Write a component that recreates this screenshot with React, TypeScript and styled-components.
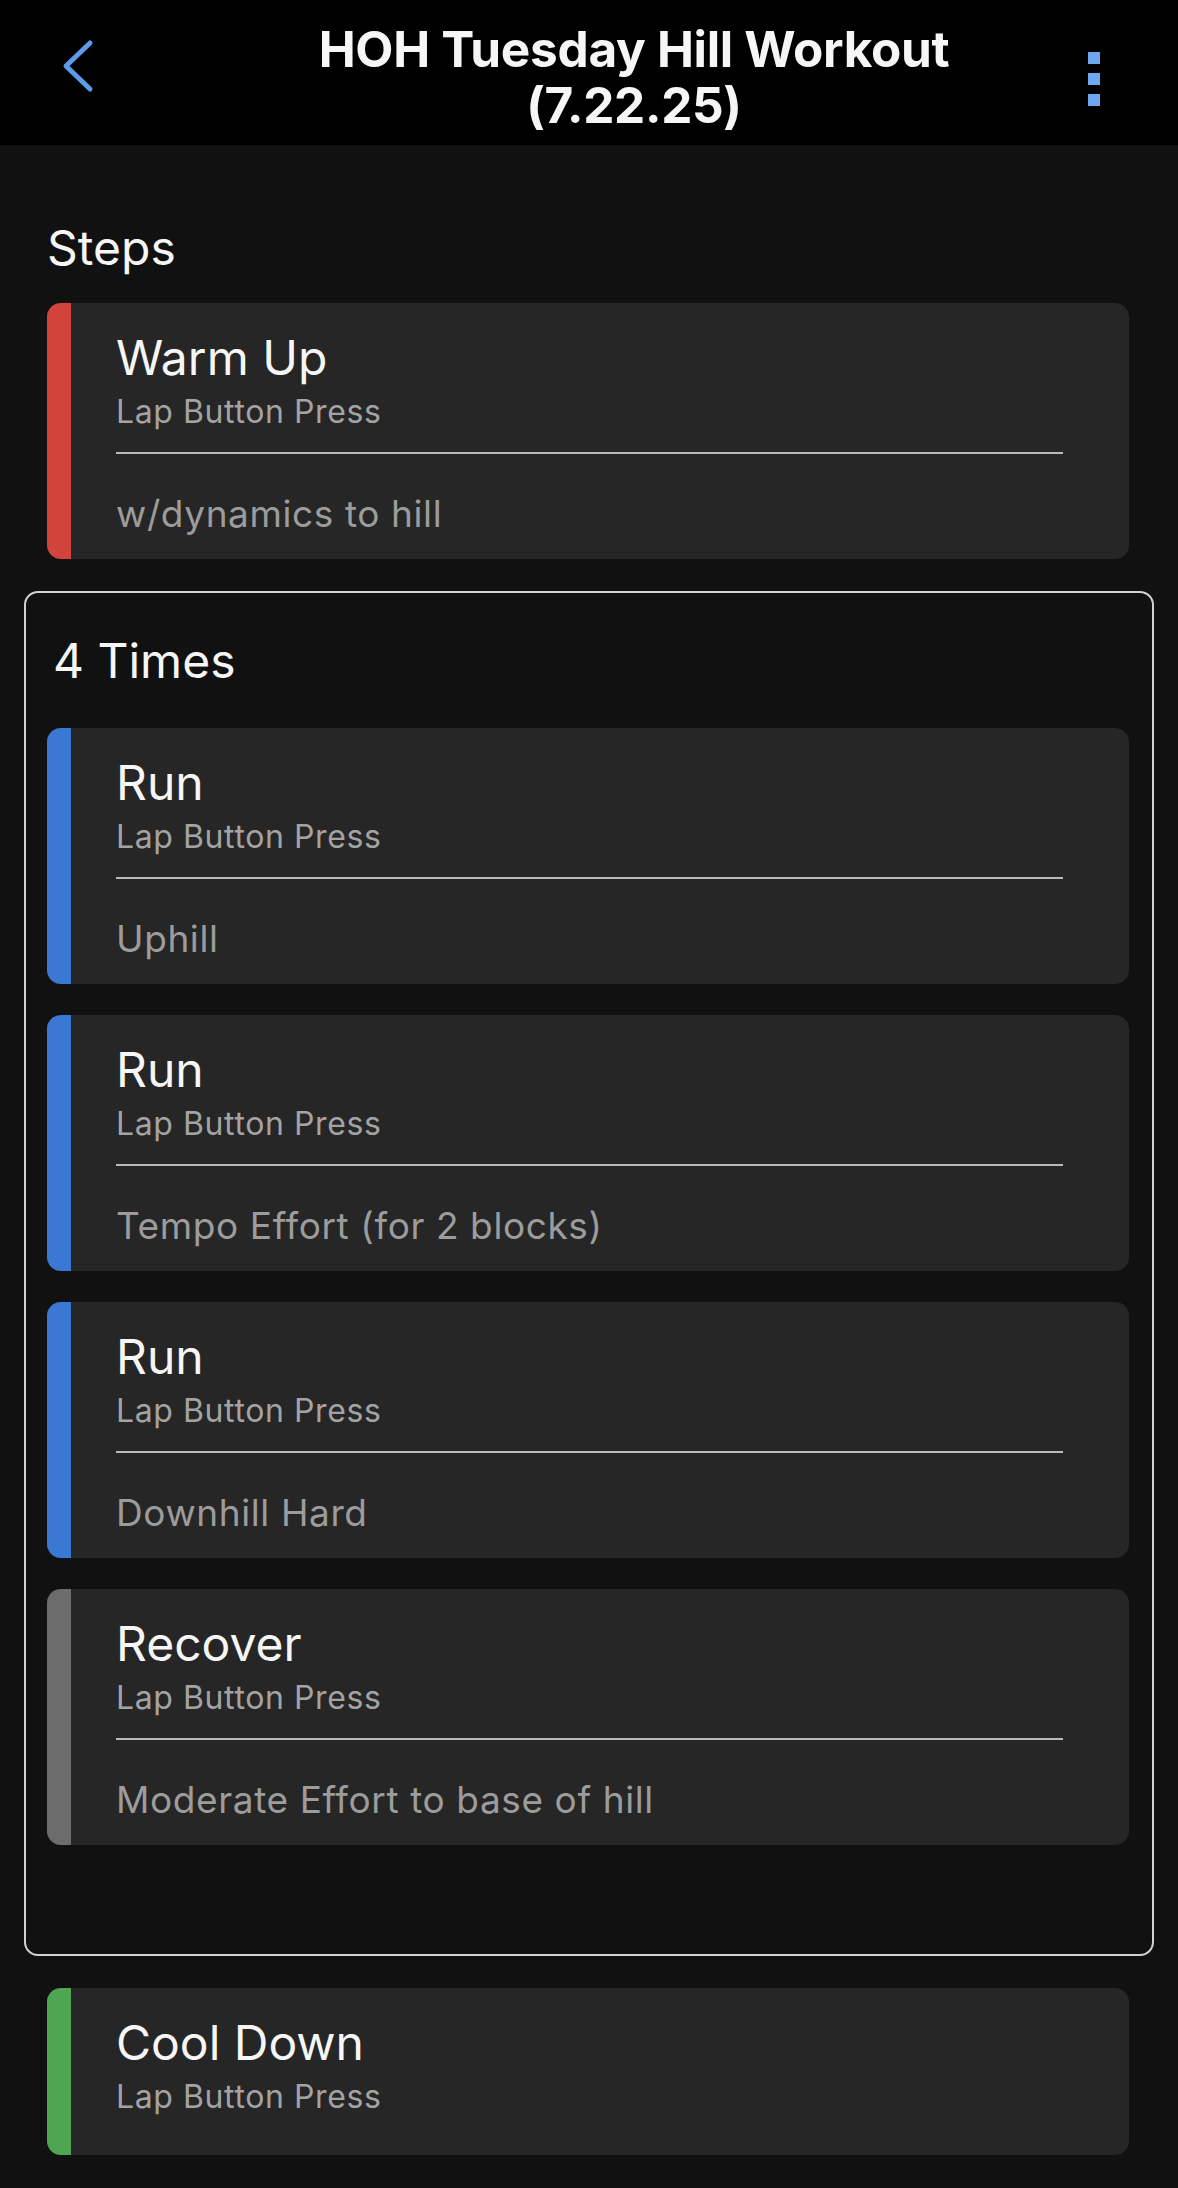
import React from "react";
import styled, { createGlobalStyle } from "styled-components";

const GlobalStyle = createGlobalStyle`
  html, body {
    margin: 0;
    padding: 0;
    background: #111111;
  }
  body {
    font-family: Inter, "Noto Sans", "Liberation Sans", sans-serif;
    color: #f4f4f4;
    -webkit-font-smoothing: antialiased;
  }
  * { box-sizing: border-box; }
`;

const Page = styled.div`
  width: 1178px;
  min-height: 2188px;
  background: #111111;
  display: flex;
  flex-direction: column;
`;

const Header = styled.header`
  height: 145px;
  background: #000000;
  display: grid;
  grid-template-columns: 180px 1fr 90px;
  align-items: start;
`;

const BackButton = styled.button`
  border: none;
  background: transparent;
  padding: 0 0 0 60px;
  height: 145px;
  display: flex;
  align-items: center;
  justify-content: flex-start;
  margin-top: -7px;
  cursor: pointer;
`;

const MenuButton = styled.button`
  border: none;
  background: transparent;
  padding: 52px 0 0 0;
  display: flex;
  flex-direction: column;
  gap: 9px;
  align-items: flex-start;
  cursor: pointer;
`;

const MenuDot = styled.span`
  width: 12px;
  height: 12px;
  background: #6ea6f0;
  display: block;
`;

const Title = styled.h1`
  margin: 0;
  padding-top: 21px;
  font-family: Inter, "Liberation Sans", sans-serif;
  font-weight: 700;
  font-size: 49.5px;
  line-height: 56px;
  color: #f6f6f6;
  text-align: center;
  letter-spacing: -0.3px;
`;

const TitleLine = styled.span`
  display: block;
`;

const Content = styled.main`
  display: flex;
  flex-direction: column;
  padding: 0 24px 33px 24px;
`;

const SectionLabel = styled.h2<{ $indent: number; $top: number }>`
  margin: ${(p) => p.$top}px 0 0 ${(p) => p.$indent}px;
  font-weight: 400;
  font-size: 48px;
  line-height: 56px;
  color: #f6f6f6;
`;

const OuterCardSlot = styled.div<{ $top: number }>`
  margin: ${(p) => p.$top}px 25px 0 23px;
`;

const RepeatBox = styled.section`
  margin-top: 32px;
  border: 2px solid #d2d2d2;
  border-radius: 14px;
  padding: 40px 23px 109px 21px;
  display: flex;
  flex-direction: column;
`;

const CardList = styled.div`
  margin-top: 39px;
  display: flex;
  flex-direction: column;
  gap: 31px;
`;

const Card = styled.article`
  display: flex;
  background: #262626;
  border-radius: 14px;
  overflow: hidden;
`;

const ColorBar = styled.div<{ $color: string }>`
  width: 24px;
  flex: 0 0 24px;
  background: ${(p) => p.$color};
`;

const CardBody = styled.div<{ $hasNote: boolean }>`
  flex: 1;
  padding: 25px 66px ${(p) => (p.$hasNote ? 23 : 38)}px 45px;
  display: flex;
  flex-direction: column;
`;

const StepName = styled.div`
  font-size: 48px;
  line-height: 60px;
  color: #f6f6f6;
`;

const StepDuration = styled.div`
  margin-top: 4px;
  font-size: 32px;
  line-height: 40px;
  letter-spacing: 0.6px;
  color: #a3a3a3;
`;

const Divider = styled.hr`
  margin: 20px 0 0 0;
  border: none;
  height: 2px;
  background: #bababa;
`;

const StepNote = styled.div`
  margin-top: 38px;
  font-size: 37px;
  line-height: 44px;
  letter-spacing: 0.6px;
  color: #9c9c9c;
`;

type Step = { name: string; color: string; note?: string };

const COLORS = {
  red: "#d1433b",
  blue: "#3b78d4",
  gray: "#6c6c6c",
  green: "#4fa652",
};

const StepCard = ({ step }: { step: Step }) => (
  <Card>
    <ColorBar $color={step.color} />
    <CardBody $hasNote={!!step.note}>
      <StepName>{step.name}</StepName>
      <StepDuration>Lap Button Press</StepDuration>
      {step.note && (
        <>
          <Divider />
          <StepNote>{step.note}</StepNote>
        </>
      )}
    </CardBody>
  </Card>
);

const repeatSteps: Step[] = [
  { name: "Run", color: COLORS.blue, note: "Uphill" },
  { name: "Run", color: COLORS.blue, note: "Tempo Effort (for 2 blocks)" },
  { name: "Run", color: COLORS.blue, note: "Downhill Hard" },
  { name: "Recover", color: COLORS.gray, note: "Moderate Effort to base of hill" },
];

export default function App() {
  return (
    <>
      <GlobalStyle />
      <Page>
        <Header>
          <BackButton aria-label="Back">
            <svg width="34" height="54" viewBox="0 0 34 54" fill="none">
              <path
                d="M30 4 L6 27 L30 50"
                stroke="#5c9bec"
                strokeWidth="5"
                strokeLinecap="round"
                strokeLinejoin="round"
              />
            </svg>
          </BackButton>
          <Title>
            <TitleLine>HOH Tuesday Hill Workout</TitleLine>
            <TitleLine>(7.22.25)</TitleLine>
          </Title>
          <MenuButton aria-label="More">
            <MenuDot />
            <MenuDot />
            <MenuDot />
          </MenuButton>
        </Header>
        <Content>
          <SectionLabel $indent={23} $top={75}>
            Steps
          </SectionLabel>
          <OuterCardSlot $top={27}>
            <StepCard step={{ name: "Warm Up", color: COLORS.red, note: "w/dynamics to hill" }} />
          </OuterCardSlot>
          <RepeatBox>
            <SectionLabel $indent={6} $top={0}>
              4 Times
            </SectionLabel>
            <CardList>
              {repeatSteps.map((s, i) => (
                <StepCard key={i} step={s} />
              ))}
            </CardList>
          </RepeatBox>
          <OuterCardSlot $top={32}>
            <StepCard step={{ name: "Cool Down", color: COLORS.green }} />
          </OuterCardSlot>
        </Content>
      </Page>
    </>
  );
}
